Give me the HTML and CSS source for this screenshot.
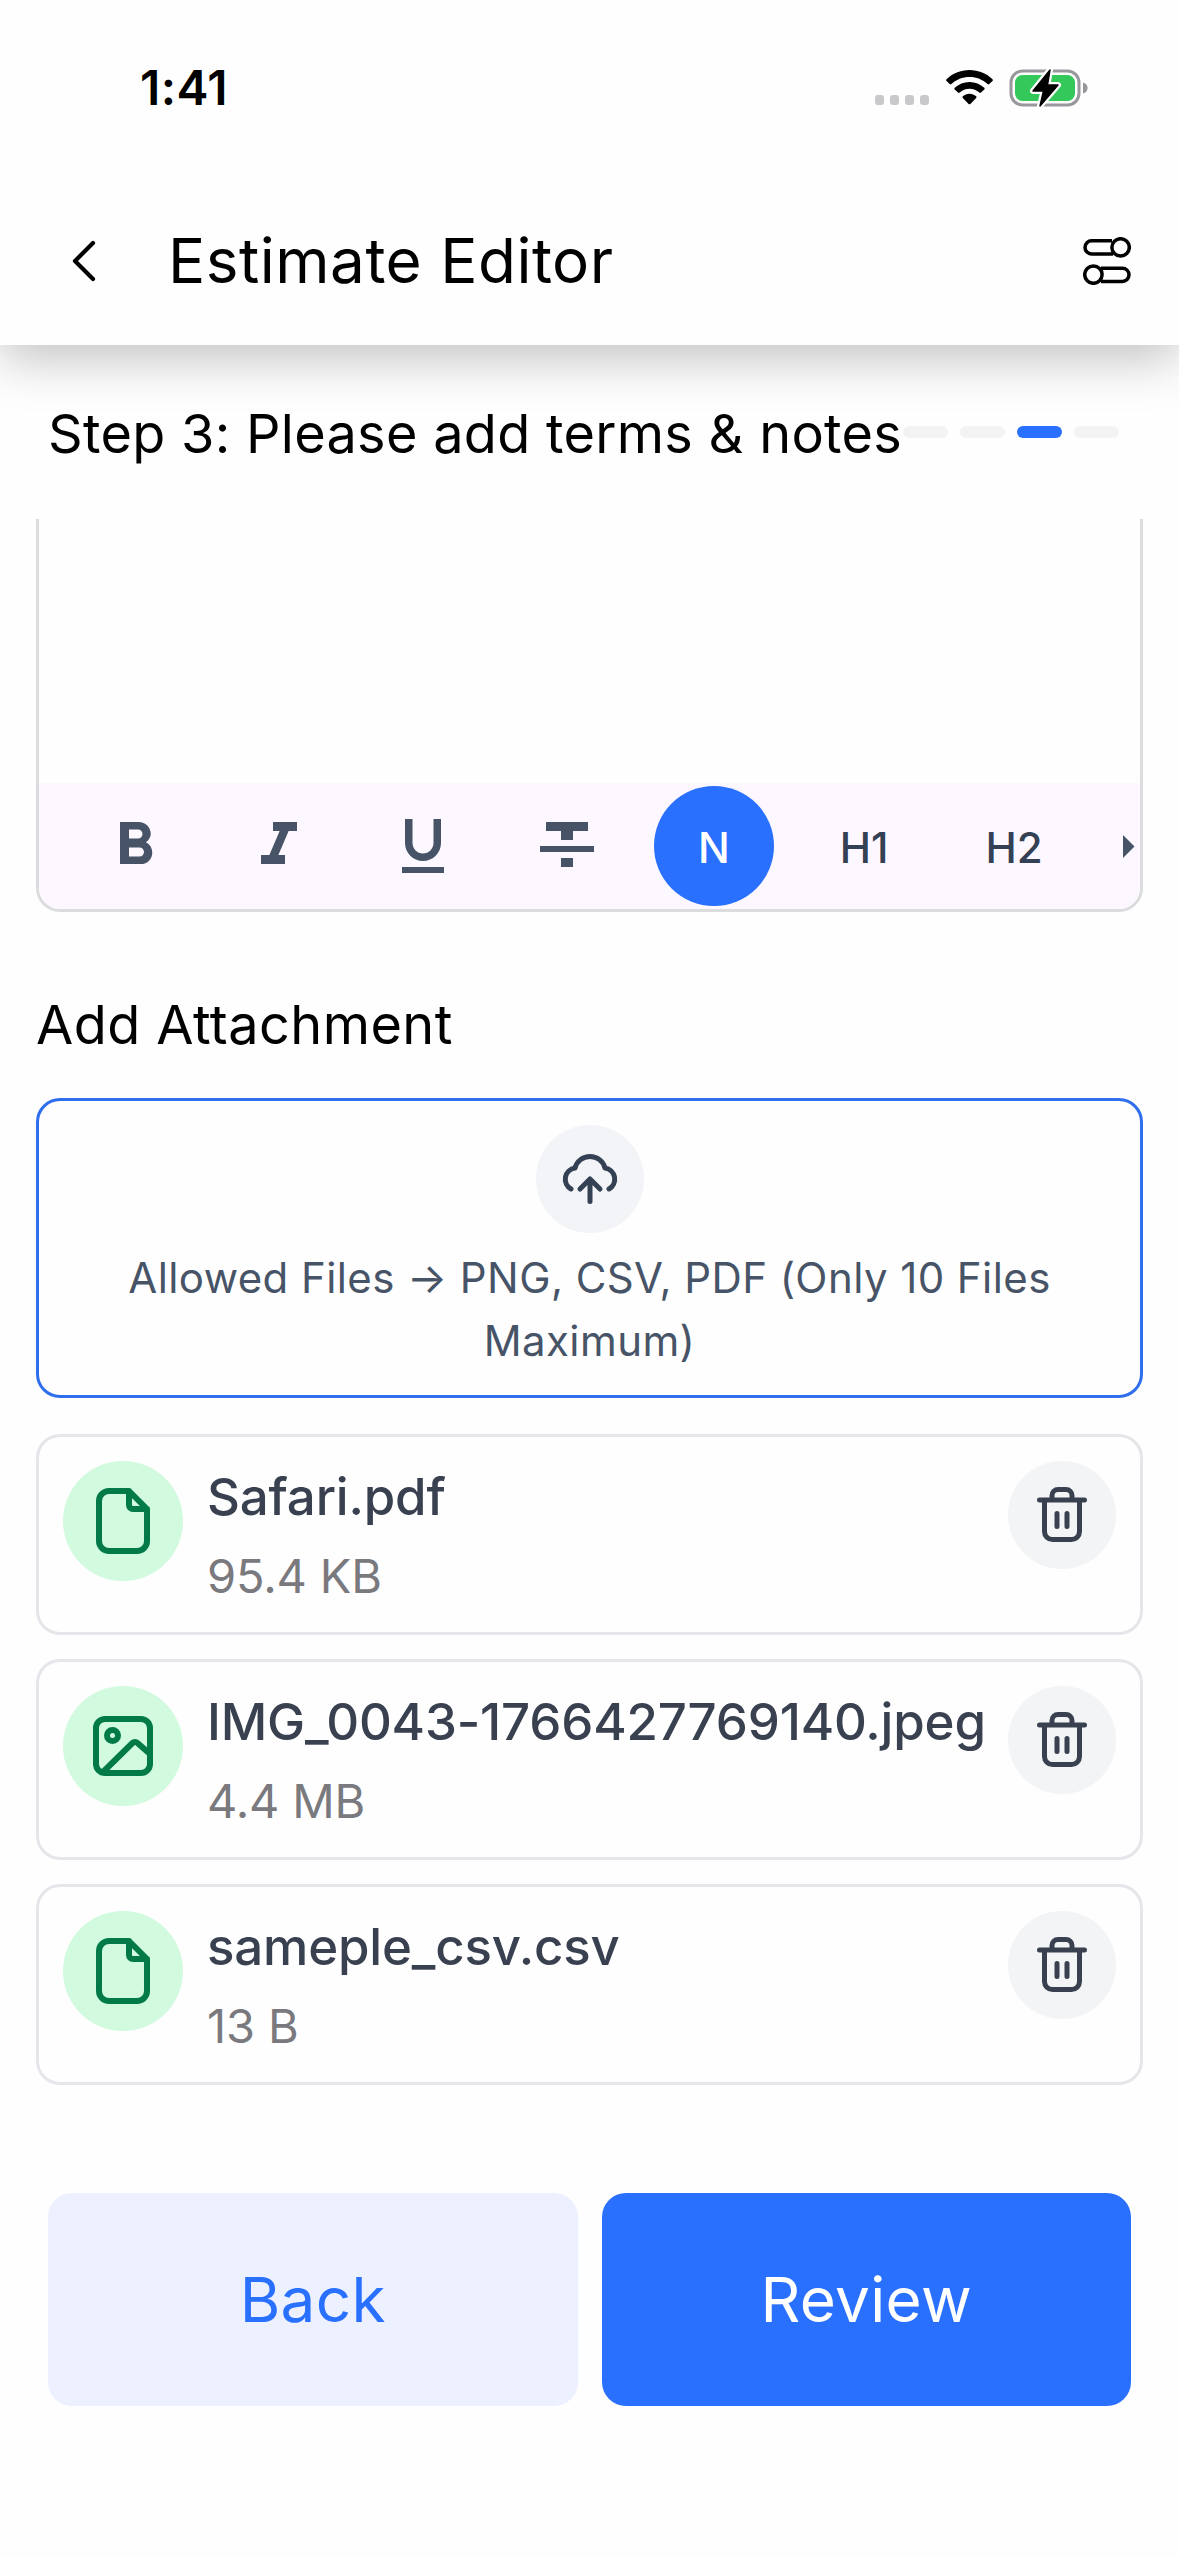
FILE: index.html
```html
<!DOCTYPE html>
<html lang="en">
<head>
<meta charset="utf-8">
<title>Estimate Editor</title>
<link rel="stylesheet" href="styles.css">
</head>
<body>
<svg class="defs" width="0" height="0">
  <symbol id="file" viewBox="0 0 72 72"><path d="M42 6H22a10 10 0 0 0-10 10v40a10 10 0 0 0 10 10h28a10 10 0 0 0 10-10V24zM42 6v14a4 4 0 0 0 4 4h14"/></symbol>
  <symbol id="image" viewBox="0 0 72 72"><rect x="9" y="9" width="54" height="54" rx="9"/><circle cx="25.500" cy="25.500" r="5.500"/><path d="M17 61l28.500-28a3.500 3.500 0 0 1 5 0L63 44"/></symbol>
  <symbol id="trash" viewBox="0 0 60 60"><path d="M7.500 15h45M12.500 15V46.500a8 8 0 0 0 8 8h19a8 8 0 0 0 8-8V15M20 15V10.500a6 6 0 0 1 6-6h8a6 6 0 0 1 6 6V15M25 28.500v13M35 28.500v13"/></symbol>
</svg>
<div class="screen">
  <header class="header">
    <div class="status">
      <span class="time">1:41</span>
      <div class="indicators">
        <span class="signal"><i></i><i></i><i></i><i></i></span>
        <svg class="wifi" width="47" height="35" viewBox="0 0 47 35"><path d="M23.500 0C32.500 0 40.500 3.500 46.500 9.200c.5.500.5 1.200 0 1.700L43.300 14c-.5.500-1.200.5-1.700 0C36.800 9.500 30.500 6.900 23.500 6.900S10.200 9.500 5.400 14c-.5.500-1.200.5-1.700 0L.5 10.900C0 10.400 0 9.700.5 9.200 6.500 3.500 14.500 0 23.500 0zM23.500 11.900c5.700 0 10.900 2.200 14.800 5.800.5.500.5 1.200 0 1.700L35 22.600c-.5.500-1.200.4-1.700 0-2.600-2.300-6-3.800-9.800-3.800s-7.200 1.500-9.800 3.800c-.5.400-1.200.5-1.700 0l-3.300-3.200c-.5-.5-.5-1.200 0-1.700 3.900-3.600 9.100-5.800 14.800-5.800zM23.500 23.800c2.500 0 4.800.9 6.600 2.400.5.400.5 1.200.1 1.700l-5.800 6c-.5.500-1.300.5-1.800 0l-5.800-6c-.4-.5-.4-1.300.1-1.700 1.800-1.500 4.100-2.400 6.600-2.400z"/></svg>
        <svg class="battery" width="80" height="40" viewBox="0 0 80 40"><rect x="2" y="3" width="68" height="34" rx="11.500" fill="none" stroke="#98989c" stroke-width="3"/><rect x="6" y="7" width="60" height="26" rx="7.500" fill="#34c759"/><path d="M74 14.500c3.500 1 4.500 3 4.500 5.500s-1 4.500-4.500 5.500z" fill="#98989c"/><path d="M41 2L24 23h10.500L31 38l18-21H38.500z" fill="#000" stroke="#fff" stroke-width="6" stroke-linejoin="round" paint-order="stroke"/><path d="M41 2L24 23h10.500L31 38l18-21H38.500z" stroke="#000" stroke-width="1.500" stroke-linejoin="round"/></svg>
      </div>
    </div>
    <div class="appbar">
      <svg class="back" width="30" height="48" viewBox="0 0 30 48" fill="none" stroke="#000" stroke-width="4.200" stroke-linecap="round" stroke-linejoin="round"><path d="M24 6L6 24l18 18"/></svg>
      <h1 class="title">Estimate Editor</h1>
      <svg class="settings" width="48" height="48" viewBox="0 0 48 48" fill="none" stroke="#000" stroke-width="3.500"><path d="M29 3.800H8.600a6.600 6.600 0 0 0 0 13.200H30M18 31.200h21.400a6.600 6.600 0 0 1 0 13.200H18"/><circle cx="37.600" cy="10.400" r="8.700"/><circle cx="10.400" cy="37.600" r="8.700"/></svg>
    </div>
  </header>

  <section class="step">
    <h2 class="heading step-title">Step 3: Please add terms &amp; notes</h2>
    <div class="progress"><i></i><i></i><i class="current"></i><i></i></div>
  </section>

  <main class="content">
    <div class="editor">
      <div class="toolbar">
        <button class="tool"><svg viewBox="0 0 24 24"><path d="M15.600 10.790c.97-.67 1.650-1.770 1.650-2.790 0-2.260-1.750-4-4-4H7v14h7.040c2.090 0 3.710-1.700 3.710-3.790 0-1.520-.86-2.820-2.150-3.420zM10 6.500h3c.83 0 1.500.67 1.500 1.500s-.67 1.500-1.500 1.500h-3v-3zm3.500 9H10v-3h3.500c.83 0 1.500.67 1.500 1.500s-.67 1.500-1.500 1.500z"/></svg></button>
        <button class="tool"><svg viewBox="0 0 24 24"><path d="M10 4v3h2.210l-3.420 8H6v3h8v-3h-2.210l3.420-8H18V4z"/></svg></button>
        <button class="tool"><svg viewBox="0 0 24 24"><path d="M12 17c3.310 0 6-2.690 6-6V3h-2.500v8c0 1.930-1.570 3.500-3.500 3.500S8.500 12.930 8.500 11V3H6v8c0 3.310 2.690 6 6 6zm-7 2v2h14v-2H5z"/></svg></button>
        <button class="tool"><svg viewBox="0 0 24 24"><path d="M10 19h4v-3h-4v3zM5 4v3h5v3h4V7h5V4H5zM3 14h18v-2H3v2z"/></svg></button>
        <button class="style-tool active"><span>N</span></button>
        <button class="style-tool"><span>H1</span></button>
        <button class="style-tool"><span>H2</span></button>
        <svg class="more" width="12" height="23" viewBox="0 0 12 23"><path d="M0 0l11.500 11.500L0 23z"/></svg>
      </div>
    </div>

    <h2 class="heading attach-title">Add Attachment</h2>
    <div class="upload">
      <span class="upload-icon"><svg width="72" height="72" viewBox="0 0 72 72" fill="none" stroke="#344054" stroke-width="5" stroke-linecap="round" stroke-linejoin="round"><path d="M17 46A11.300 11.300 0 0 1 21 25a15.500 15.500 0 0 1 30 0A11.300 11.300 0 0 1 55 46M36 58.500V36.500M26 46L36 36l10 10"/></svg></span>
      <p class="upload-text">Allowed Files → PNG, CSV, PDF (Only 10 Files Maximum)</p>
    </div>

    <ul class="files">
      <li class="file">
        <span class="file-icon"><svg width="72" height="72"><use href="#file"/></svg></span>
        <div class="info"><span class="name">Safari.pdf</span><span class="size">95.4 KB</span></div>
        <button class="delete"><svg width="60" height="60"><use href="#trash"/></svg></button>
      </li>
      <li class="file">
        <span class="file-icon"><svg width="72" height="72"><use href="#image"/></svg></span>
        <div class="info"><span class="name">IMG_0043-1766427769140.jpeg</span><span class="size">4.4 MB</span></div>
        <button class="delete"><svg width="60" height="60"><use href="#trash"/></svg></button>
      </li>
      <li class="file">
        <span class="file-icon"><svg width="72" height="72"><use href="#file"/></svg></span>
        <div class="info"><span class="name">sameple_csv.csv</span><span class="size">13 B</span></div>
        <button class="delete"><svg width="60" height="60"><use href="#trash"/></svg></button>
      </li>
    </ul>
  </main>

  <footer class="actions">
    <button class="action secondary">Back</button>
    <button class="action primary">Review</button>
  </footer>
</div>
</body>
</html>
```

FILE: styles.css
```css
* { box-sizing: border-box; margin: 0; padding: 0; }
body { background: #fefefe; font-family: Inter, "Liberation Sans", sans-serif; color: #000; }
button { border: 0; background: none; font: inherit; color: inherit; }
.defs { display: block; position: absolute; }
.screen { width: 1179px; height: 2556px; overflow: hidden; display: flex; flex-direction: column; background: #fefefe; }

.header { height: 345px; flex: none; background: #fefefe; box-shadow: 0 12px 48px rgba(0, 0, 0, .25); }
.status { height: 175px; padding: 0 90px 0 140px; display: flex; justify-content: space-between; align-items: center; }
.time { font-size: 48px; font-weight: 600; line-height: 60px; letter-spacing: .4px; }
.indicators { display: flex; align-items: center; }
.signal { display: flex; gap: 6px; margin: 24px 17px 0 0; }
.signal i { width: 9px; height: 10px; border-radius: 3px; background: #c9c9cb; }
.wifi { margin-right: 16px; }
.appbar { height: 172px; padding: 0 48px 0 69px; display: flex; align-items: center; }
.title { flex: 1; margin-left: 69px; font-size: 62px; font-weight: 400; line-height: 84px; letter-spacing: .5px; }

.step { height: 174px; flex: none; padding: 0 60px 0 48px; display: flex; align-items: center; }
.heading { font-size: 54px; font-weight: 400; line-height: 72px; letter-spacing: .45px; white-space: nowrap; }
.step-title { width: 855px; padding-top: 3px; letter-spacing: .3px; }
.progress { display: flex; gap: 12px; }
.progress i { width: 45px; height: 12px; border-radius: 6px; background: #f3f3f3; }
.progress .current { background: #2970ff; }

.content { padding: 0 36px; display: flex; flex-direction: column; }
.editor { height: 393px; border: 3px solid #dadcde; border-top: 0; border-radius: 0 0 24px 24px; overflow: hidden; display: flex; flex-direction: column; justify-content: flex-end; }
.toolbar { height: 126px; background: #fdf7ff; padding-left: 24px; display: flex; align-items: center; }
.tool { width: 144px; height: 120px; display: flex; justify-content: center; align-items: center; }
.tool svg { width: 72px; height: 72px; fill: #475467; }
.style-tool { width: 150px; display: flex; justify-content: center; }
.style-tool span { width: 120px; height: 120px; border-radius: 50%; font-size: 42px; font-weight: 500; line-height: 124px; color: #344054; }
.style-tool.active span { background: #2970ff; color: #fff; }
.more { margin-left: 34px; fill: #475467; }

.attach-title { margin: 77px 0 37px; }
.upload { height: 300px; border: 3px solid #2f6fed; border-radius: 24px; padding-top: 24px; display: flex; flex-direction: column; align-items: center; }
.upload-icon { width: 108px; height: 108px; border-radius: 50%; background: #f2f4f7; display: flex; align-items: center; justify-content: center; }
.upload-text { margin-top: 13px; width: 1010px; text-align: center; font-size: 42px; line-height: 63px; letter-spacing: .42px; color: #475467; }

.files { margin-top: 36px; list-style: none; display: flex; flex-direction: column; gap: 24px; }
.file { height: 201px; border: 3px solid #e4e6ea; border-radius: 24px; padding: 24px; display: flex; align-items: flex-start; }
.file-icon { width: 120px; height: 120px; border-radius: 50%; background: #d1fadf; display: flex; align-items: center; justify-content: center; }
.file-icon svg { fill: none; stroke: #027a48; stroke-width: 6; stroke-linejoin: round; stroke-linecap: round; }
.info { flex: 1; margin-left: 24px; display: flex; flex-direction: column; white-space: nowrap; }
.name { font-size: 51px; font-weight: 500; line-height: 72px; letter-spacing: -.18px; color: #394150; }
.size { margin-top: 7px; font-size: 47px; line-height: 72px; letter-spacing: -.15px; color: #79797e; }
.delete { width: 108px; height: 108px; border-radius: 50%; background: #f2f4f5; display: flex; align-items: center; justify-content: center; }
.delete svg { fill: none; stroke: #394150; stroke-width: 5; stroke-linecap: round; stroke-linejoin: round; }

.actions { margin-top: 108px; padding: 0 48px; display: flex; gap: 24px; }
.action { flex: 1; height: 213px; border-radius: 24px; font-size: 62px; letter-spacing: .3px; }
.secondary { background: #ecf0ff; color: #2970ff; }
.primary { background: #2970ff; color: #fff; }
```
